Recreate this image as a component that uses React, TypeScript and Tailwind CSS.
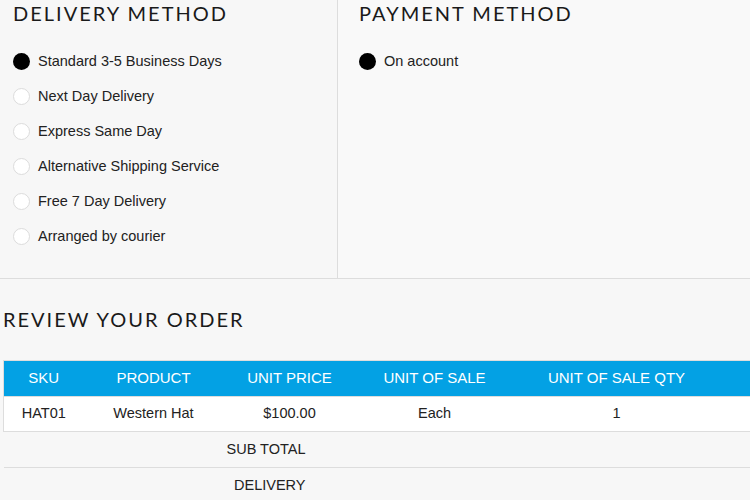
import React from "react";

const deliveries = [
  "Standard 3-5 Business Days",
  "Next Day Delivery",
  "Express Same Day",
  "Alternative Shipping Service",
  "Free 7 Day Delivery",
  "Arranged by courier",
];

function Radio({ checked }: { checked?: boolean }) {
  return checked ? (
    <span className="block w-[17px] h-[17px] rounded-full bg-black shrink-0" />
  ) : (
    <span className="block w-[17px] h-[17px] rounded-full bg-white border border-[#dcdcdc] shrink-0" />
  );
}

const heading = "text-[20px] leading-[28px] tracking-[2px] font-normal text-[#1a1a1a] font-['Lato',sans-serif]";

export default function App() {
  return (
    <div className="w-[750px] h-[500px] overflow-hidden bg-[#f7f7f7] text-[#222] font-['Liberation_Sans',Arial,sans-serif]">
      <div className="flex h-[279px] border-b border-[#dddddd]">
        <div className="w-[338px] border-r border-[#dddddd] pl-[13px]">
          <h2 className={heading + " -mt-[1px]"}>DELIVERY METHOD</h2>
          <div className="mt-[17px]">
            {deliveries.map((d, i) => (
              <div key={d} className="flex items-center h-[35px] gap-[8px]">
                <Radio checked={i === 0} />
                <span className="text-[14.5px]">{d}</span>
              </div>
            ))}
          </div>
        </div>
        <div className="flex-1 pl-[21px] bg-[#f9f9f9]">
          <h2 className={heading + " -mt-[1px]"}>PAYMENT METHOD</h2>
          <div className="mt-[17px]">
            <div className="flex items-center h-[35px] gap-[8px]">
              <Radio checked />
              <span className="text-[14.5px]">On account</span>
            </div>
          </div>
        </div>
      </div>
      <div className="pl-[3px]">
        <h2 className={heading + " mt-[26px]"}>REVIEW YOUR ORDER</h2>
        <table className="mt-[27px] w-[900px] border-collapse text-[14.5px] text-center">
          <thead>
            <tr className="bg-[#03a1e4] text-white h-[36px] border border-[#dddddd] text-[15px]">
              <th className="w-[80px] font-normal">SKU</th>
              <th className="w-[140px] font-normal">PRODUCT</th>
              <th className="w-[132px] font-normal">UNIT PRICE</th>
              <th className="w-[158px] font-normal">UNIT OF SALE</th>
              <th className="w-[206px] font-normal">UNIT OF SALE QTY</th>
              <th className="font-normal"></th>
            </tr>
          </thead>
          <tbody>
            <tr className="bg-white h-[35px] border border-[#dddddd]">
              <td>HAT01</td>
              <td>Western Hat</td>
              <td>$100.00</td>
              <td>Each</td>
              <td>1</td>
              <td></td>
            </tr>
            <tr className="h-[36px] border-b border-[#dddddd]">
              <td colSpan={3} className="text-right pr-[50px]">SUB TOTAL</td>
              <td colSpan={3}></td>
            </tr>
            <tr className="h-[36px] border-b border-[#dddddd]">
              <td colSpan={3} className="text-right pr-[50px]">DELIVERY</td>
              <td colSpan={3}></td>
            </tr>
          </tbody>
        </table>
      </div>
    </div>
  );
}
